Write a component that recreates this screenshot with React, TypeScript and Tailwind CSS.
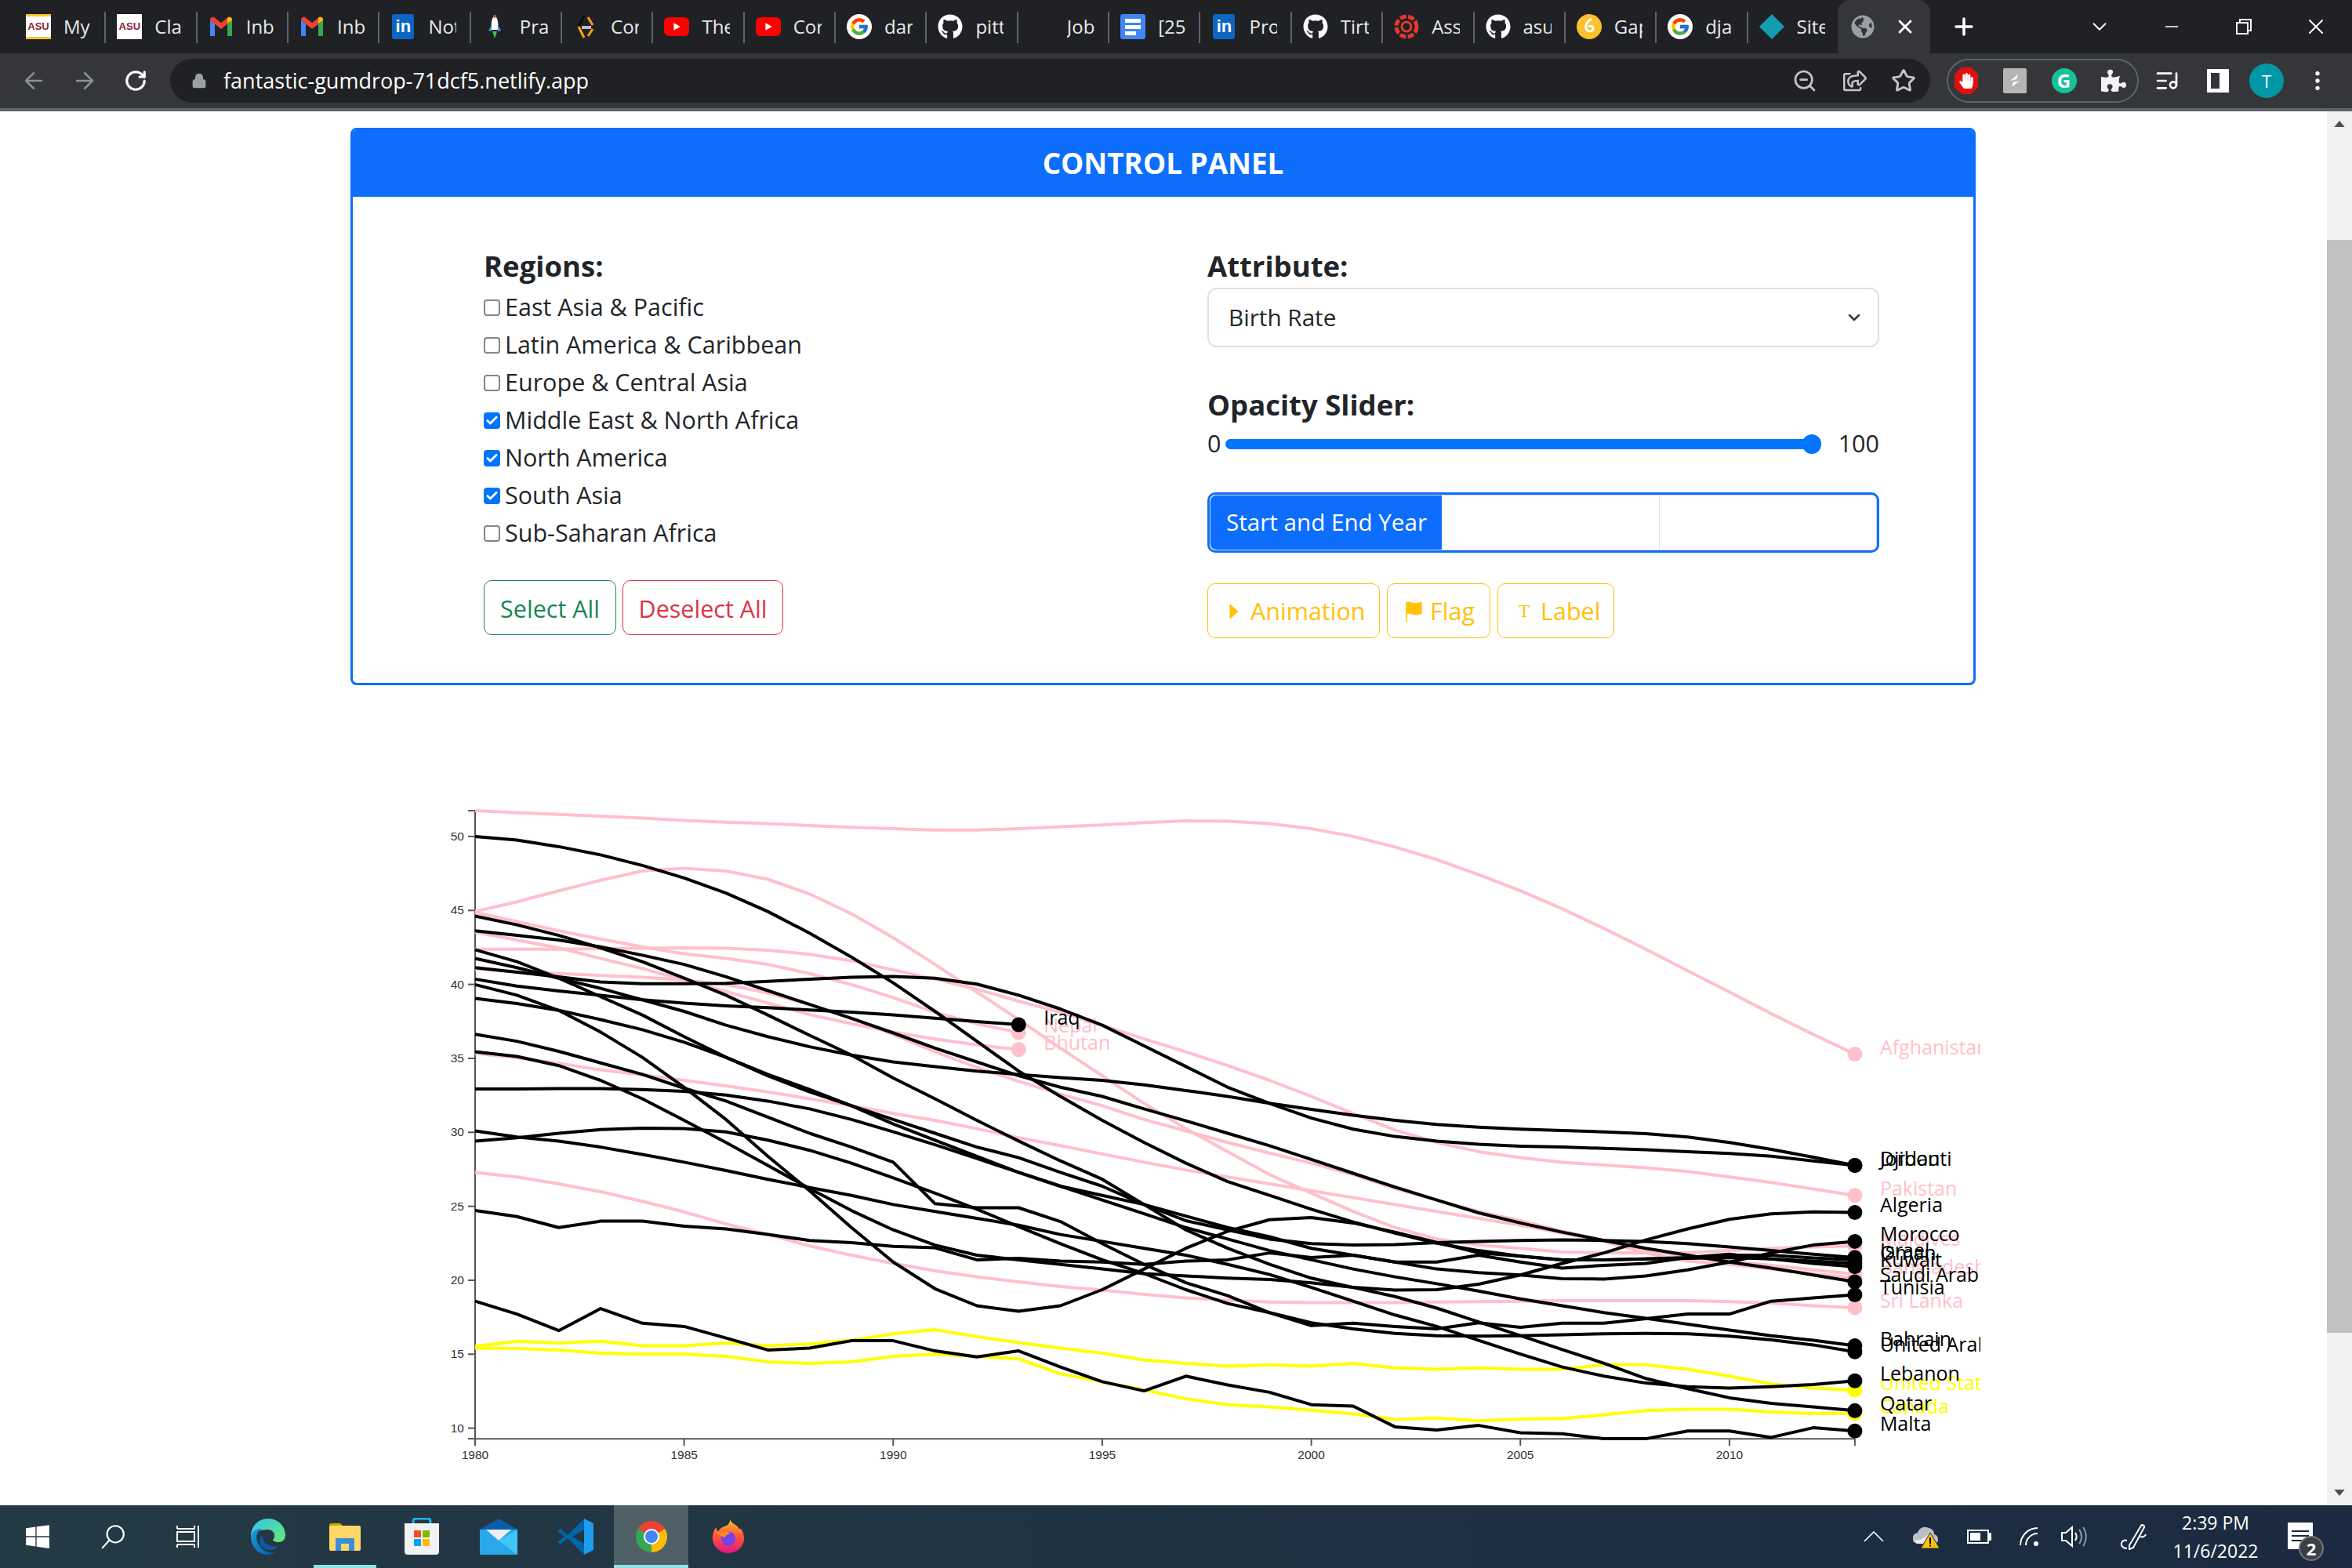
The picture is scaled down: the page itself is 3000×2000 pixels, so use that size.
import React from "react";
import { ChevronDown, EllipsisVertical, ListMusic, Plus, Star, X, ZoomOut, Minus, RotateCw, ArrowLeft, ArrowRight, Lock, Check } from "lucide-react";
import { FaGithub, FaHandPaper, FaPuzzlePiece, FaRegShareSquare, FaWindows, FaGlobeAmericas } from "react-icons/fa";
import { FcGoogle } from "react-icons/fc";

const ui = "font-['Open_Sans',sans-serif]";

const AsuIcon = ({ bars }: { bars?: boolean }) => (
  <div className={`w-[32px] h-[32px] bg-white flex items-center justify-center ${bars ? "border-y-[3px] border-[#ffc627]" : ""}`}>
    <span className="text-[13px] font-bold text-[#8c1d40] font-['Liberation_Sans',sans-serif]">ASU</span>
  </div>
);

const GmailIcon = () => (
  <svg viewBox="0 0 32 32" className="w-[32px] h-[32px]">
    <path d="M2 28V8l6 4v16z" fill="#4285f4" />
    <path d="M24 28V12l6-4v20z" fill="#34a853" />
    <path d="M2 8l14 11L30 8v-1c0-3-3-4-5-3l-9 7-9-7C5 3 2 4 2 7z" fill="#ea4335" />
    <path d="M24 12l6-4V7c0-3-3-4-5-3l-1 1z" fill="#fbbc04" />
  </svg>
);

const LinkedinIcon = () => (
  <div className="w-[28px] h-[32px] rounded-[3px] bg-[#0a66c2] flex items-center justify-center text-white font-bold text-[22px] font-['Liberation_Sans',sans-serif] leading-none">in</div>
);

const RocketIcon = () => (
  <svg viewBox="0 0 32 32" className="w-[32px] h-[32px]">
    <path d="M16 1c4 5 5 10 4 19h-8c-1-9 0-14 4-19z" fill="#fff" />
    <path d="M12 14l-4 7 4 1zM20 14l4 7-4 1z" fill="#38a3d8" />
    <path d="M13 22h6l-3 9z" fill="#3fbf4f" />
    <circle cx="16" cy="3" r="2" fill="#e5483f" />
  </svg>
);

const CodeIcon = () => (
  <svg viewBox="0 0 32 32" className="w-[32px] h-[32px]" fill="none" strokeWidth="3">
    <path d="M14 2L7 16" stroke="#0c0c0c" />
    <path d="M7 16l7 14" stroke="#f89f1b" />
    <path d="M19 4l6 10" stroke="#f89f1b" />
    <path d="M25 19l-6 9" stroke="#f89f1b" />
    <path d="M11 17h12" stroke="#bcbcbc" strokeWidth="4" />
  </svg>
);

const YoutubeIcon = () => (
  <div className="w-[32px] h-[24px] rounded-[6px] bg-[#f00] flex items-center justify-center">
    <svg viewBox="0 0 10 10" className="w-[12px] h-[12px]"><path d="M2 1l7 4-7 4z" fill="#fff" /></svg>
  </div>
);

const GoogleIcon = () => (
  <div className="w-[32px] h-[32px] rounded-full bg-white flex items-center justify-center"><FcGoogle size={26} /></div>
);

const GithubIcon = () => <FaGithub size={32} className="text-white" />;

const DocsIcon = () => (
  <div className="w-[32px] h-[32px] rounded-[3px] bg-[#4285f4] flex flex-col items-center justify-center gap-[3px]">
    <div className="w-[20px] h-[5px] bg-white" />
    <div className="w-[20px] h-[5px] bg-white" />
    <div className="w-[14px] h-[5px] bg-white self-start ml-[6px]" />
  </div>
);

const AsanaIcon = () => (
  <svg viewBox="0 0 32 32" className="w-[32px] h-[32px]" fill="none" stroke="#e5392f">
    <circle cx="16" cy="16" r="6" strokeWidth="3" />
    <circle cx="16" cy="16" r="13" strokeWidth="5" strokeDasharray="8 2.5" />
  </svg>
);

const GapIcon = () => (
  <svg viewBox="0 0 32 32" className="w-[32px] h-[32px]">
    <circle cx="16" cy="16" r="16" fill="#fbc02d" />
    <path d="M19 6c-5 3-8 7-7 12 1 5 8 5 9 1 1-3-3-5-6-3" fill="none" stroke="#fff" strokeWidth="3" />
  </svg>
);

const DiamondIcon = () => (
  <svg viewBox="0 0 32 32" className="w-[32px] h-[32px]"><path d="M16 0l16 16-16 16L0 16z" fill="#159cb0" /></svg>
);

const tabs: { label: string; icon: React.ReactNode }[] = [
  { label: "My", icon: <AsuIcon bars /> },
  { label: "Clas", icon: <AsuIcon /> },
  { label: "Inbo", icon: <GmailIcon /> },
  { label: "Inbo", icon: <GmailIcon /> },
  { label: "Not", icon: <LinkedinIcon /> },
  { label: "Pra", icon: <RocketIcon /> },
  { label: "Cor", icon: <CodeIcon /> },
  { label: "The", icon: <YoutubeIcon /> },
  { label: "Cor", icon: <YoutubeIcon /> },
  { label: "dar", icon: <GoogleIcon /> },
  { label: "pitt", icon: <GithubIcon /> },
  { label: "Job", icon: <div className="w-[32px] h-[32px]" /> },
  { label: "[25", icon: <DocsIcon /> },
  { label: "Pro", icon: <LinkedinIcon /> },
  { label: "Tirt", icon: <GithubIcon /> },
  { label: "Ass", icon: <AsanaIcon /> },
  { label: "asu", icon: <GithubIcon /> },
  { label: "Gap", icon: <GapIcon /> },
  { label: "djan", icon: <GoogleIcon /> },
  { label: "Site", icon: <DiamondIcon /> },
];

const TabStrip = () => (
  <div className={`h-[68px] bg-[#202124] flex pl-[19px] shrink-0 ${ui}`}>
    {tabs.map((tab, i) => (
      <div key={i} className="w-[116.35px] h-full flex items-center pl-[14px] relative shrink-0">
        <div className="w-[32px] flex justify-center shrink-0">{tab.icon}</div>
        <span className="ml-[16px] w-[36px] overflow-hidden whitespace-nowrap text-[24px] text-[#e8eaed]">{tab.label}</span>
        {i < tabs.length - 1 && <div className="absolute right-0 top-[15px] h-[40px] w-[2px] bg-[#5f6368]" />}
      </div>
    ))}
    <div className="w-[118px] h-full bg-[#35363a] rounded-t-[16px] flex items-center pl-[17px] shrink-0 ml-[-2px]">
      <FaGlobeAmericas size={30} className="text-[#9aa0a6]" />
      <X size={28} strokeWidth={2.5} className="text-white ml-[25px]" />
    </div>
    <div className="w-[86px] flex items-center justify-center shrink-0">
      <Plus size={34} strokeWidth={2.5} className="text-white" />
    </div>
    <div className="ml-auto flex">
      <div className="w-[92px] flex items-center justify-center"><ChevronDown size={30} strokeWidth={1.5} className="text-white" /></div>
      <div className="w-[92px] flex items-center justify-center"><Minus size={26} strokeWidth={1.5} className="text-white" /></div>
      <div className="w-[92px] flex items-center justify-center">
        <svg viewBox="0 0 24 24" className="w-[24px] h-[24px]" fill="none" stroke="#fff" strokeWidth="2"><rect x="3" y="7" width="14" height="14" /><path d="M7 7V3h14v14h-4" /></svg>
      </div>
      <div className="w-[92px] flex items-center justify-center"><X size={32} strokeWidth={1.5} className="text-white" /></div>
    </div>
  </div>
);

const Toolbar = () => (
  <div className={`h-[74px] bg-[#35363a] border-b-[4px] border-[#5f6368] flex items-center pl-[10px] shrink-0 ${ui}`}>
    <div className="w-[66px] flex justify-center"><ArrowLeft size={34} strokeWidth={1.8} className="text-[#8e9196]" /></div>
    <div className="w-[64px] flex justify-center"><ArrowRight size={34} strokeWidth={1.8} className="text-[#8e9196]" /></div>
    <div className="w-[66px] flex justify-center"><RotateCw size={30} strokeWidth={2.5} className="text-white" /></div>
    <div className="ml-[11px] w-[2245px] h-[56px] rounded-full bg-[#202124] flex items-center pl-[27px]">
      <Lock size={20} className="text-[#9aa0a6] fill-[#9aa0a6]" />
      <span className="ml-[21px] text-[27px] text-white">fantastic-gumdrop-71dcf5.netlify.app</span>
      <div className="ml-auto flex items-center pr-[4px]">
        <div className="w-[64px] flex justify-center"><ZoomOut size={32} className="text-[#c4c7c5]" /></div>
        <div className="w-[64px] flex justify-center"><FaRegShareSquare size={30} className="text-[#c4c7c5]" /></div>
        <div className="w-[60px] flex justify-center"><Star size={32} strokeWidth={2.2} className="text-[#c4c7c5]" /></div>
      </div>
    </div>
    <div className="ml-[21px] w-[245px] h-[56px] rounded-full border-[2px] border-[#5f6368] flex items-center pl-[4px]">
      <div className="w-[40px] flex justify-center">
        <div className="w-[30px] h-[34px] bg-[#e01010] flex items-center justify-center [clip-path:polygon(30%_0,70%_0,100%_25%,100%_75%,70%_100%,30%_100%,0_75%,0_25%)]">
          <FaHandPaper size={20} className="text-white" />
        </div>
      </div>
      <div className="w-[64px] ml-[12px] flex justify-center">
        <div className="w-[30px] h-[32px] rounded-[2px] bg-[#b5b5b5] flex items-center justify-center">
          <svg viewBox="0 0 20 20" className="w-[20px] h-[20px]"><path d="M4 10l10-8-2 6zM16 10L6 18l2-6z" fill="#fff" /></svg>
        </div>
      </div>
      <div className="w-[64px] ml-[2px] flex justify-center">
        <div className="w-[32px] h-[32px] rounded-full bg-[#15c39a] flex items-center justify-center text-white text-[24px] font-bold leading-none">G</div>
      </div>
      <div className="w-[64px] ml-[2px] flex justify-center"><FaPuzzlePiece size={32} className="text-[#f1f3f4]" /></div>
    </div>
    <div className="w-[65px] ml-[3px] flex justify-center"><ListMusic size={32} className="text-white" /></div>
    <div className="w-[65px] flex justify-center">
      <div className="w-[28px] h-[30px] border-[5px] border-r-[12px] border-white" />
    </div>
    <div className="w-[60px] flex justify-center">
      <div className="w-[44px] h-[44px] rounded-full bg-[#0097a7] flex items-center justify-center text-white text-[22px]">T</div>
    </div>
    <div className="w-[70px] flex justify-center"><EllipsisVertical size={32} className="text-white" /></div>
  </div>
);

const regions = [
  { name: "East Asia & Pacific", checked: false },
  { name: "Latin America & Caribbean", checked: false },
  { name: "Europe & Central Asia", checked: false },
  { name: "Middle East & North Africa", checked: true },
  { name: "North America", checked: true },
  { name: "South Asia", checked: true },
  { name: "Sub-Saharan Africa", checked: false },
];

const CheckBox = ({ checked }: { checked: boolean }) =>
  checked ? (
    <span className="w-[21px] h-[21px] rounded-[4px] bg-[#0075ff] flex items-center justify-center shrink-0">
      <Check size={17} strokeWidth={4} className="text-white" />
    </span>
  ) : (
    <span className="w-[21px] h-[21px] rounded-[4px] bg-white border-[2px] border-[#858585] shrink-0" />
  );

const ControlPanel = () => (
  <div className={`ml-[447px] mt-[21px] w-[2073px] h-[711px] border-[3px] border-[#0d6efd] rounded-[8px] overflow-hidden text-[30.5px] text-[#212529] ${ui}`}>
    <div className="h-[85px] bg-[#0d6efd] flex items-center justify-center text-white text-[36.8px] font-bold">CONTROL PANEL</div>
    <div className="flex pl-[167px] pt-[64px]">
      <div className="w-[923px] shrink-0">
        <h2 className="h-[48px] leading-[48px] text-[36.5px] font-bold">Regions:</h2>
        <div className="mt-[5px]">
          {regions.map((r) => (
            <div key={r.name} className="h-[48px] flex items-center whitespace-nowrap">
              <CheckBox checked={r.checked} />
              <span className="ml-[6px]">{r.name}</span>
            </div>
          ))}
        </div>
        <div className="mt-[36px] flex gap-[8px]">
          <button className="h-[70px] w-[169px] pt-[4px] border-[1px] border-[#198754] rounded-[10px] text-[#198754]">Select All</button>
          <button className="h-[70px] w-[205px] pt-[4px] border-[1px] border-[#dc3545] rounded-[10px] text-[#dc3545]">Deselect All</button>
        </div>
      </div>
      <div className="w-[857px] shrink-0">
        <h2 className="h-[48px] leading-[48px] text-[36.5px] font-bold">Attribute:</h2>
        <div className="mt-[4px] h-[76px] border-[2px] border-[#dee2e6] rounded-[12px] flex items-center justify-between pl-[25px] pr-[18px]">
          <span className="text-[29.7px]">Birth Rate</span>
          <ChevronDown size={24} strokeWidth={2.5} className="text-[#343a40]" />
        </div>
        <h2 className="mt-[49px] h-[48px] leading-[48px] text-[36.5px] font-bold">Opacity Slider:</h2>
        <div className="mt-[2px] h-[48px] flex items-center">
          <span className="w-[23px]">0</span>
          <div className="relative w-[758px] h-[13px] rounded-full bg-[#0075ff]">
            <div className="absolute right-[-2px] top-[-6px] w-[24px] h-[25px] rounded-full bg-[#0075ff]" />
          </div>
          <span className="ml-auto">100</span>
        </div>
        <div className="mt-[38px] h-[77px] border-[3px] border-[#0d6efd] rounded-[10px]">
          <div className="h-full border-[1px] border-[#ced4da] rounded-[8px] flex overflow-hidden">
            <div className="w-[295px] bg-[#0d6efd] text-white text-[29.6px] flex items-center pl-[20px] whitespace-nowrap">Start and End Year</div>
            <div className="w-[278px] border-r-[1px] border-[#dee2e6]" />
          </div>
        </div>
        <div className="mt-[39px] flex gap-[9px] text-[#ffc107]">
          <button className="h-[70px] w-[220px] border-[1px] border-[#ffc107] rounded-[10px] flex items-center pt-[2px] pl-[27px]">
            <svg viewBox="0 0 12 20" className="w-[12px] h-[20px]"><path d="M1 1l10 9-10 9z" fill="#ffc107" stroke="#ffc107" strokeLinejoin="round" /></svg>
            <span className="ml-[15px]">Animation</span>
          </button>
          <button className="h-[70px] w-[132px] border-[1px] border-[#ffc107] rounded-[10px] flex items-center pt-[2px] pl-[23px]">
            <svg viewBox="0 0 21 28" className="w-[21px] h-[28px]">
              <path d="M0 2h1.6v26H0z" fill="#ffc107" />
              <path d="M1.6 2c5-2 7 2 12 1 3-.4 5-1 7-1.600V17c-2 .6-4 1.200-7 1.400-5 .6-7-2.800-12-1z" fill="#ffc107" />
            </svg>
            <span className="ml-[10px]">Flag</span>
          </button>
          <button className="h-[70px] w-[149px] border-[1px] border-[#ffc107] rounded-[10px] flex items-center pt-[2px] pl-[26px]">
            <span className="font-['Liberation_Serif',serif] text-[23px]">T</span>
            <span className="ml-[14px]">Label</span>
          </button>
        </div>
      </div>
    </div>
  </div>
);

// y values are read off the reference, top of chart = 0, unit is 1/1.704 px
const pink = [
  { name: "Afghanistan", left: [24, 28, 32, 36, 40, 45, 49, 52, 56, 60, 63, 66, 66, 63, 59, 55], right: [50, 46, 47, 52, 63, 80, 103, 130, 163, 198, 237, 280, 325, 372, 418, 465, 510, 553] },
  { name: "Maldives", left: [243, 222, 198, 175, 155, 149, 155, 173, 205, 248, 300, 358, 418, 478, 540, 600], right: [660, 715, 765, 815, 855, 895, 930, 955, 968, 975, 983, 985, 985, 985, 980, 975, 972, 970] },
  { name: "Nepal", left: [245, 265, 285, 303, 320, 335, 345, 358, 378, 402, 430, 462, 487, 506], right: [] },
  { name: "Bhutan", left: [288, 305, 322, 345, 367, 392, 417, 442, 467, 487, 505, 520, 533, 543], right: [] },
  { name: "Pakistan", left: [325, 325, 325, 324, 323, 322, 323, 327, 336, 350, 370, 390, 412, 438, 462, 490], right: [520, 548, 578, 610, 645, 682, 718, 745, 765, 778, 788, 794, 800, 808, 820, 832, 846, 860] },
  { name: "Bangladesh", left: [368, 374, 378, 382, 386, 392, 402, 420, 445, 475, 510, 548, 582, 612, 640, 665], right: [695, 720, 745, 768, 790, 815, 845, 870, 895, 915, 938, 958, 978, 995, 1003, 1012, 1022, 1031] },
  { name: "", left: [551, 561, 573, 587, 598, 610, 622, 635, 650, 665, 682, 697, 715, 735, 752, 770], right: [788, 805, 820, 835, 850, 865, 880, 895, 910, 925, 942, 960, 985, 1003, 1010, 1020, 1030, 1040] },
  { name: "Sri Lanka", left: [810, 820, 835, 852, 873, 896, 922, 945, 970, 990, 1008, 1024, 1037, 1048, 1058, 1066], right: [1075, 1083, 1088, 1092, 1093, 1093, 1093, 1092, 1091, 1090, 1089, 1089, 1089, 1089, 1091, 1094, 1100, 1104] },
];

const yellow = [
  { name: "United States", left: [1188, 1177, 1181, 1177, 1187, 1187, 1181, 1187, 1183, 1175, 1161, 1152, 1167, 1180, 1192, 1203], right: [1218, 1225, 1231, 1228, 1231, 1225, 1235, 1238, 1235, 1238, 1238, 1228, 1228, 1238, 1253, 1270, 1279, 1283] },
  { name: "Canada", left: [1192, 1193, 1196, 1203, 1205, 1205, 1210, 1222, 1225, 1222, 1210, 1205, 1210, 1215, 1248, 1265], right: [1283, 1302, 1315, 1320, 1327, 1335, 1347, 1344, 1350, 1346, 1345, 1337, 1328, 1325, 1325, 1331, 1334, 1334] },
];

const black = [
  { name: "Oman", left: [80, 88, 102, 120, 143, 170, 203, 243, 290, 342, 398, 460, 525, 590, 645, 697], right: [745, 790, 830, 860, 890, 918, 942, 964, 980, 992, 1000, 1000, 998, 995, 990, 990, 996, 1000] },
  { name: "Qatar", left: [253, 272, 295, 322, 352, 388, 425, 468, 512, 555, 605, 650, 697, 742, 785, 825], right: [880, 935, 975, 1010, 1040, 1060, 1080, 1105, 1135, 1165, 1195, 1225, 1258, 1280, 1300, 1312, 1320, 1328] },
  { name: "Saudi Arabia", left: [285, 295, 305, 320, 338, 358, 385, 415, 445, 475, 507, 540, 570, 600, 625, 645], right: [672, 698, 725, 752, 782, 812, 842, 870, 898, 920, 940, 958, 975, 990, 1005, 1018, 1033, 1048] },
  { name: "Israel", left: [326, 352, 388, 428, 468, 515, 560, 600, 635, 665, 695, 725, 755, 778, 810, 840], right: [880, 915, 935, 955, 965, 968, 967, 963, 960, 958, 957, 958, 960, 965, 972, 980, 988, 995] },
  { name: "Djibouti", left: [345, 365, 388, 410, 435, 460, 490, 515, 537, 555, 570, 580, 590, 597, 604, 610], right: [620, 632, 645, 660, 673, 686, 697, 706, 712, 716, 719, 722, 726, 733, 745, 760, 777, 795] },
  { name: "Jordan", left: [365, 375, 385, 396, 400, 400, 399, 395, 390, 386, 384, 388, 401, 425, 455, 490], right: [535, 580, 625, 660, 692, 716, 732, 742, 749, 753, 755, 758, 761, 765, 769, 775, 785, 795] },
  { name: "Iraq", left: [390, 405, 416, 425, 435, 442, 448, 452, 457, 462, 468, 475, 482, 489], right: [] },
  { name: "Kuwait", left: [893, 906, 930, 916, 916, 927, 933, 945, 958, 963, 971, 974, 1000, 997, 1003, 1005], right: [1010, 1003, 1000, 985, 995, 990, 1005, 1005, 990, 1005, 1018, 1012, 1008, 995, 988, 998, 1008, 1015] },
  { name: "", left: [402, 425, 458, 505, 560, 625, 695, 775, 850, 930, 1005, 1063, 1100, 1112, 1100, 1065], right: [1020, 975, 938, 913, 908, 920, 940, 962, 985, 992, 1000, 1000, 998, 997, 995, 998, 1003, 1008] },
  { name: "Morocco", left: [432, 443, 458, 478, 500, 527, 560, 597, 630, 665, 705, 740, 775, 810, 840, 860], right: [880, 905, 930, 950, 975, 990, 1005, 1020, 1028, 1033, 1041, 1042, 1035, 1022, 1005, 985, 968, 960] },
  { name: "Tunisia", left: [510, 525, 547, 572, 597, 627, 655, 690, 725, 755, 788, 878, 887, 887, 917, 965], right: [1010, 1050, 1078, 1115, 1143, 1138, 1145, 1150, 1137, 1147, 1138, 1138, 1128, 1118, 1118, 1090, 1083, 1076] },
  { name: "Algeria", left: [548, 558, 578, 610, 650, 697, 745, 795, 845, 893, 935, 968, 990, 1000, 1010, 1020], right: [1030, 1035, 1040, 1043, 1050, 1060, 1066, 1065, 1053, 1033, 1008, 985, 957, 933, 912, 900, 896, 897] },
  { name: "Bahrain", left: [629, 629, 628, 628, 630, 634, 642, 655, 672, 695, 722, 750, 780, 810, 840, 870], right: [900, 930, 955, 980, 1000, 1020, 1037, 1052, 1068, 1085, 1100, 1115, 1127, 1140, 1153, 1165, 1175, 1187] },
  { name: "Lebanon", left: [720, 733, 742, 755, 771, 788, 806, 825, 843, 860, 880, 895, 910, 925, 945, 960], right: [975, 990, 1010, 1032, 1060, 1090, 1120, 1145, 1175, 1205, 1233, 1253, 1268, 1276, 1279, 1276, 1271, 1263] },
  { name: "United Arab Emirates", left: [742, 735, 725, 717, 714, 715, 722, 740, 762, 790, 822, 855, 890, 928, 965, 1000], right: [1030, 1065, 1095, 1115, 1137, 1150, 1160, 1165, 1166, 1165, 1163, 1161, 1160, 1161, 1166, 1174, 1185, 1200] },
  { name: "Malta", left: [1090, 1118, 1154, 1106, 1138, 1145, 1170, 1196, 1192, 1176, 1176, 1198, 1211, 1198, 1233, 1265], right: [1285, 1253, 1272, 1288, 1315, 1318, 1363, 1370, 1360, 1376, 1378, 1389, 1389, 1372, 1372, 1386, 1365, 1372] },
];

const toY = (z: number) => z / 1.704;
const toX = (i: number) => 66 + 53.33 * i;
const yTicks = [10, 15, 20, 25, 30, 35, 40, 45, 50];
const xTicks = [1980, 1985, 1990, 1995, 2000, 2005, 2010];

const Series = ({ name, left, right, color }: { name: string; left: number[]; right: number[]; color: string }) => {
  const vals = [...left, ...right];
  const last = vals.length - 1;
  const pts = vals.map((z, i) => `${toX(i).toFixed(1)},${toY(z).toFixed(1)}`).join(" ");
  return (
    <g>
      <polyline points={pts} fill="none" stroke={color} strokeWidth={4} strokeLinejoin="round" />
      <circle cx={toX(last)} cy={toY(vals[last])} r={9.5} fill={color} />
      {name && (
        <text x={toX(last) + 32} y={toY(vals[last])} fill={color} fontSize={25} fontFamily="Open Sans, sans-serif">
          {name}
        </text>
      )}
    </g>
  );
};

const Chart = () => (
  <svg width={1986} height={880} className="block ml-[540px] mt-[146px] shrink-0">
    {yTicks.map((v) => {
      const y = toY(1366 - (v - 10) * 32.15);
      return (
        <g key={v}>
          <line x1={57} x2={66} y1={y} y2={y} stroke="#555" strokeWidth={2} />
          <text x={52} y={y + 5} textAnchor="end" fontSize={15.5} fill="#333" fontFamily="Liberation Sans, sans-serif">{v}</text>
        </g>
      );
    })}
    {xTicks.map((t) => (
      <g key={t}>
        <line x1={toX(t - 1980)} x2={toX(t - 1980)} y1={toY(1389)} y2={toY(1389) + 9} stroke="#555" strokeWidth={2} />
        <text x={toX(t - 1980)} y={toY(1389) + 26} textAnchor="middle" fontSize={15.5} fill="#333" fontFamily="Liberation Sans, sans-serif">{t}</text>
      </g>
    ))}
    <line x1={toX(33)} x2={toX(33)} y1={toY(1389)} y2={toY(1389) + 9} stroke="#555" strokeWidth={2} />
    <path d={`M57 ${toY(24)}H66V${toY(1389)}H${toX(33)}`} fill="none" stroke="#555" strokeWidth={2} />
    <path d={`M57 ${toY(1389)}H66`} fill="none" stroke="#555" strokeWidth={2} />
    {yellow.map((s) => <Series key={s.name} {...s} color="#ffff00" />)}
    {pink.map((s, i) => <Series key={i} {...s} color="#ffc0cb" />)}
    {black.map((s, i) => <Series key={i} {...s} color="#000" />)}
  </svg>
);

const Scrollbar = () => (
  <div className="w-[32px] bg-[#f1f1f1] flex flex-col items-center shrink-0">
    <div className="h-[32px] flex items-center justify-center">
      <svg viewBox="0 0 10 6" className="w-[14px] h-[8px]"><path d="M5 0l5 6H0z" fill="#505050" /></svg>
    </div>
    <div className="mt-[132px] h-[1394px] w-full bg-[#c1c1c1]" />
    <div className="mt-auto h-[32px] flex items-center justify-center">
      <svg viewBox="0 0 10 6" className="w-[14px] h-[8px]"><path d="M5 6L0 0h10z" fill="#505050" /></svg>
    </div>
  </div>
);

const EdgeIcon = () => (
  <svg viewBox="0 0 48 48" className="w-[48px] h-[48px]">
    <defs>
      <linearGradient id="edgeTop" x1="0" y1="0" x2="1" y2="1"><stop offset="0" stopColor="#35c1f1" /><stop offset="1" stopColor="#66eb6e" /></linearGradient>
      <linearGradient id="edgeLow" x1="0" y1="0" x2="1" y2="1"><stop offset="0" stopColor="#1b9de2" /><stop offset="1" stopColor="#0c59a4" /></linearGradient>
    </defs>
    <path d="M2 24C2 10 12 1 24 1c13 0 22 10 22 21 0 6-4 9-9 9-4 0-7-2-7-3 4-3 3-13-7-13C12 15 3 20 2 24z" fill="url(#edgeTop)" />
    <path d="M2 24c1-7 8-11 14-10-6 3-8 9-6 16 3 9 12 17 24 14-3 2-7 3-11 3C11 47 2 36 2 24z" fill="url(#edgeLow)" />
    <path d="M17 23c0 9 9 15 19 13-3 6-14 7-20 1-5-5-4-12 1-14z" fill="#0c59a4" />
  </svg>
);

const ExplorerIcon = () => (
  <svg viewBox="0 0 44 40" className="w-[44px] h-[40px]">
    <path d="M2 6a3 3 0 0 1 3-3h11l4 4h-18z" fill="#d9a200" />
    <rect x="2" y="6" width="40" height="32" rx="2" fill="#ffd766" />
    <path d="M10 38V22h24v16h-7v-9h-10v9z" fill="#3a8ed8" />
  </svg>
);

const StoreIcon = () => (
  <svg viewBox="0 0 48 48" className="w-[48px] h-[48px]">
    <path d="M13 9V4a3 3 0 0 1 3-3h16a3 3 0 0 1 3 3v5" fill="none" stroke="#1fb3ea" strokeWidth="3" />
    <path d="M2 7h44v36a4 4 0 0 1-4 4H6a4 4 0 0 1-4-4z" fill="#f2f2f2" />
    <rect x="14" y="16" width="9" height="9" fill="#f25022" />
    <rect x="25" y="16" width="9" height="9" fill="#7fba00" />
    <rect x="14" y="27" width="9" height="9" fill="#00a4ef" />
    <rect x="25" y="27" width="9" height="9" fill="#ffb900" />
  </svg>
);

const MailIcon = () => (
  <svg viewBox="0 0 48 46" className="w-[48px] h-[46px]">
    <path d="M24 0l24 14H0z" fill="#0a5eac" />
    <rect y="14" width="48" height="32" fill="#28a8ea" />
    <path d="M8 14h32l-16 14z" fill="#eee" />
    <path d="M24 28L48 14v32z" fill="#50d9ff" opacity="0.6" />
  </svg>
);

const VsCodeIcon = () => (
  <svg viewBox="0 0 48 48" className="w-[48px] h-[48px]">
    <path d="M35 1l12 6v34l-12 6z" fill="#1f9cf0" />
    <path d="M35 1L14 22 5 14 1 17l9 7-9 7 4 3 9-8 21 21V33L20 24 35 15z" fill="#0065a9" />
  </svg>
);

const ChromeIcon = () => (
  <svg viewBox="0 0 48 48" className="w-[48px] h-[48px]">
    <path d="M24 24L6.7 14A20 20 0 0 1 41.3 14z" fill="#ea4335" />
    <path d="M24 24L41.3 14A20 20 0 0 1 24 44z" fill="#fbbc04" />
    <path d="M24 24L24 44A20 20 0 0 1 6.7 14z" fill="#34a853" />
    <circle cx="24" cy="24" r="10" fill="#fff" />
    <circle cx="24" cy="24" r="8" fill="#4285f4" />
  </svg>
);

const FirefoxIcon = () => (
  <svg viewBox="0 0 48 48" className="w-[44px] h-[46px]">
    <defs>
      <linearGradient id="fox" x1="0.5" y1="0" x2="0.5" y2="1"><stop offset="0" stopColor="#ffbd2e" /><stop offset="0.5" stopColor="#ff5634" /><stop offset="1" stopColor="#e31587" /></linearGradient>
    </defs>
    <path d="M27 0c0 6 8 6 12 13 3-1 6 3 7 13 0 12-10 21-22 21S2 37 2 26c0-6 3-13 5-15 0 3 2 5 3 6 2-5 8-7 13-9 2-2 3-5 4-8z" fill="url(#fox)" />
    <circle cx="24" cy="27" r="10" fill="#7542e5" />
    <path d="M9 20c6-3 12-4 18-1-3 2-7 3-8 6-3-1-6-2-10-5z" fill="#ff8a2b" />
  </svg>
);

const Tray = () => (
  <div className="ml-auto flex items-center">
    <svg viewBox="0 0 26 14" className="w-[26px] h-[14px] mr-[37px]" fill="none" stroke="#fff" strokeWidth="1.600"><path d="M1 13L13 1l12 12" /></svg>
    <svg viewBox="0 0 34 30" className="w-[34px] h-[30px] mr-[35px]">
      <path d="M7 24a7 7 0 0 1-1-14c2-6 8-9 14-6 5 1 7 4 7 8 4 1 5 4 5 7 0 3-2 5-5 5z" fill="#b9c0c6" />
      <path d="M2 20c6 0 12-3 20-10l8 14H7c-3 0-5-2-5-4z" fill="#e9ecef" />
      <path d="M22 10l12 20H10z" fill="#ffc107" stroke="#1b2a40" />
      <path d="M21 16h2v8h-2zM21 25.500h2v2h-2z" fill="#000" />
    </svg>
    <div className="w-[28px] h-[18px] border-[2px] border-white flex items-center pl-[2px] relative mr-[38px]">
      <div className="w-[13px] h-[10px] bg-white" />
      <div className="absolute right-[-5px] top-[2px] w-[3px] h-[10px] bg-white" />
    </div>
    <svg viewBox="0 0 26 26" className="w-[26px] h-[26px] mr-[28px]" fill="none" stroke="#fff" strokeWidth="2">
      <path d="M2 24A22 22 0 0 1 24 2" />
      <path d="M9 24A15 15 0 0 1 24 9" />
      <circle cx="22" cy="22" r="3" fill="#fff" stroke="none" />
    </svg>
    <svg viewBox="0 0 34 28" className="w-[34px] h-[28px] mr-[41px]" fill="none" strokeWidth="2">
      <path d="M1 9h5l8-7v24l-8-7H1z" stroke="#fff" />
      <path d="M18 9c2 3 2 7 0 10" stroke="#fff" />
      <path d="M23 5c4 5 4 13 0 18" stroke="#8d98a6" />
      <path d="M28 2c5 7 5 17 0 24" stroke="#8d98a6" />
    </svg>
    <svg viewBox="0 0 34 34" className="w-[34px] h-[34px] mr-[31px]" fill="none" stroke="#fff" strokeWidth="2">
      <path d="M12 28L27 3c1-2 5 0 4 2L17 31l-5 2z" />
      <path d="M9 32c-5 0-8-3-7-7 1-3 4-4 7-3" />
      <path d="M26 17c3 1 6 0 7-3" />
    </svg>
    <div className="w-[114px] text-center text-[23px] leading-[36px] whitespace-nowrap">
      <div>2:39 PM</div>
      <div>11/6/2022</div>
    </div>
    <div className="relative w-[36px] h-[36px] ml-[35px] mr-[46px]">
      <div className="w-[32px] h-[34px] bg-white flex flex-col gap-[4px] items-center justify-center">
        <div className="w-[22px] h-[2px] bg-[#1b2a40]" />
        <div className="w-[22px] h-[2px] bg-[#1b2a40]" />
        <div className="w-[22px] h-[2px] bg-[#1b2a40]" />
      </div>
      <div className="absolute left-[14px] top-[17px] w-[32px] h-[32px] rounded-full bg-[#3b3f44] border-[2px] border-[#777] flex items-center justify-center text-[22px] font-bold">2</div>
    </div>
  </div>
);

const Taskbar = () => (
  <div className={`h-[80px] shrink-0 bg-gradient-to-r from-[#243a44] to-[#1b2a40] flex items-stretch text-white ${ui}`}>
    <div className="w-[96px] flex items-center justify-center"><FaWindows size={34} /></div>
    <div className="w-[96px] flex items-center justify-center">
      <svg viewBox="0 0 32 32" className="w-[34px] h-[34px]" fill="none" stroke="#fff" strokeWidth="2"><circle cx="19" cy="13" r="10" /><path d="M12 20L3 30" /></svg>
    </div>
    <div className="w-[101px] flex items-center justify-center pr-[5px]">
      <svg viewBox="0 0 32 32" className="w-[32px] h-[32px]" fill="none" stroke="#fff" strokeWidth="2"><path d="M2 6h22M2 2v4M24 2v4" /><rect x="2" y="10" width="22" height="12" /><path d="M2 26h22M2 26v4M24 26v4M29 2v28" /></svg>
    </div>
    <div className="w-[98px] flex items-center justify-center"><EdgeIcon /></div>
    <div className="w-[98px] flex items-center justify-center relative">
      <ExplorerIcon />
      <div className="absolute bottom-0 left-[9px] w-[80px] h-[4px] bg-[#8fe3e8]" />
    </div>
    <div className="w-[98px] flex items-center justify-center"><StoreIcon /></div>
    <div className="w-[98px] flex items-center justify-center"><MailIcon /></div>
    <div className="w-[98px] flex items-center justify-center"><VsCodeIcon /></div>
    <div className="w-[95px] flex items-center justify-center relative bg-[#4f6067]">
      <ChromeIcon />
      <div className="absolute bottom-0 left-0 w-full h-[4px] bg-[#8fe3e8]" />
    </div>
    <div className="w-[102px] flex items-center justify-center"><FirefoxIcon /></div>
    <Tray />
  </div>
);

export default function App() {
  return (
    <div className="w-[3000px] h-[2000px] flex flex-col bg-white overflow-hidden">
      <TabStrip />
      <Toolbar />
      <div className="flex-1 flex min-h-0">
        <main className="flex-1 flex flex-col min-w-0 overflow-hidden bg-white">
          <ControlPanel />
          <Chart />
        </main>
        <Scrollbar />
      </div>
      <Taskbar />
    </div>
  );
}
